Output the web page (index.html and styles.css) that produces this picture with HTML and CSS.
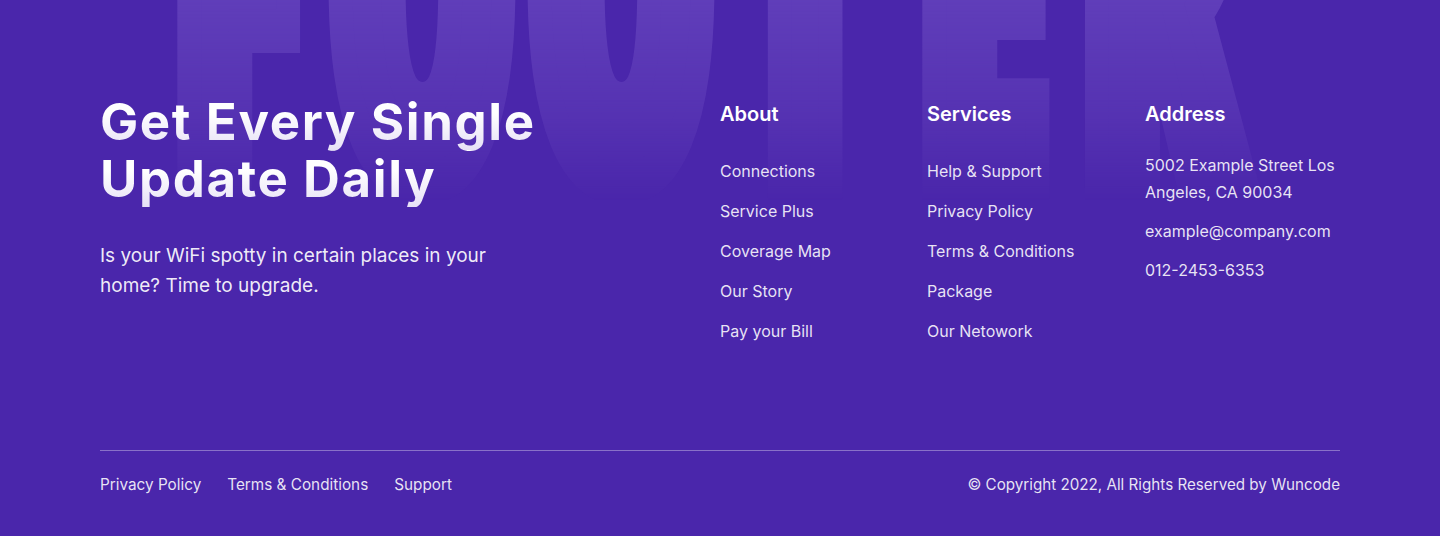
FILE: index.html
```html
<!DOCTYPE html>
<html lang="en">
<head>
<meta charset="utf-8">
<title>Footer</title>
<link rel="stylesheet" href="styles.css">
</head>
<body>
<footer class="footer">
  <div class="bg-word-wrap" aria-hidden="true">
    <div class="bg-word"><span class="l-f">F</span><span class="l-o1">O</span><span class="l-o2">O</span><span class="l-t">T</span><span class="l-e">E</span><span class="l-r">R</span></div>
  </div>
  <div class="container">
    <div class="top">
      <div class="intro">
        <h2 class="intro-title">Get Every Single<br>Update Daily</h2>
        <p class="intro-text">Is your WiFi spotty in certain places in your home? Time to upgrade.</p>
      </div>
      <div class="col">
        <h3 class="col-title">About</h3>
        <ul class="links">
          <li><a href="#">Connections</a></li>
          <li><a href="#">Service Plus</a></li>
          <li><a href="#">Coverage Map</a></li>
          <li><a href="#">Our Story</a></li>
          <li><a href="#">Pay your Bill</a></li>
        </ul>
      </div>
      <div class="col">
        <h3 class="col-title">Services</h3>
        <ul class="links">
          <li><a href="#">Help &amp; Support</a></li>
          <li><a href="#">Privacy Policy</a></li>
          <li><a href="#">Terms &amp; Conditions</a></li>
          <li><a href="#">Package</a></li>
          <li><a href="#">Our Netowork</a></li>
        </ul>
      </div>
      <div class="col">
        <h3 class="col-title">Address</h3>
        <div class="address">
          <p>5002 Example Street Los Angeles, CA 90034</p>
          <p>example@company.com</p>
          <p>012-2453-6353</p>
        </div>
      </div>
    </div>
    <div class="bottom">
      <nav class="bottom-links">
        <a href="#">Privacy Policy</a>
        <a href="#">Terms &amp; Conditions</a>
        <a href="#">Support</a>
      </nav>
      <p class="copyright">© Copyright 2022, All Rights Reserved by Wuncode</p>
    </div>
  </div>
</footer>
</body>
</html>
```

FILE: styles.css
```css
* {
  box-sizing: border-box;
  margin: 0;
  padding: 0;
}

html,
body {
  background: #4a26ab;
}

body {
  font-family: Inter, "Noto Sans", sans-serif;
  color: #fff;
  overflow: hidden;
}

.footer {
  position: relative;
  height: 536px;
  overflow: hidden;
  background: #4a26ab;
}

/* decorative big word */
.bg-word-wrap {
  position: absolute;
  left: 0;
  top: 0;
  width: 100%;
  height: 210px;
  overflow: hidden;
  pointer-events: none;
  -webkit-mask-image: linear-gradient(to bottom, #000 0, rgba(0, 0, 0, 0.55) 110px, transparent 200px);
  mask-image: linear-gradient(to bottom, #000 0, rgba(0, 0, 0, 0.55) 110px, transparent 200px);
}

.bg-word {
  position: absolute;
  left: 152px;
  top: -300px;
  display: flex;
  font-family: "Open Sans", sans-serif;
  font-weight: 800;
  font-stretch: 75%;
  font-size: 300px;
  line-height: 1;
  white-space: nowrap;
  color: #603eb9;
  -webkit-text-stroke: 24px #603eb9;
  transform: scaleY(1.8);
  transform-origin: 0 0;
}

.bg-word span {
  display: block;
  text-align: center;
}

.l-f { width: 170px; }
.l-o1 { width: 200px; }
.l-o2 { width: 198px; }
.l-t { width: 170px; }
.l-e { width: 186px; }
.l-r { width: 170px; }

.container {
  position: relative;
  padding: 0 100px;
}

.top {
  display: grid;
  grid-template-columns: 620px 207px 218px 195px;
  padding-top: 93px;
  padding-bottom: 107px;
}

.intro-title {
  font-weight: 700;
  font-size: 51px;
  line-height: 57px;
  letter-spacing: 1.6px;
  background: linear-gradient(180deg, #ffffff 35%, #e6e0f6 100%) 0 0 / 100% 57px repeat-y;
  -webkit-background-clip: text;
  background-clip: text;
  color: transparent;
}

.intro-text {
  margin-top: 34px;
  max-width: 400px;
  font-size: 19px;
  line-height: 30px;
  color: rgba(255, 255, 255, 0.92);
}

.col {
  padding-top: 9px;
}

.col-title {
  font-size: 20px;
  font-weight: 600;
  line-height: 24px;
}

.links {
  list-style: none;
  margin-top: 33px;
  display: flex;
  flex-direction: column;
  gap: 16px;
}

.links a,
.bottom-links a {
  color: rgba(255, 255, 255, 0.88);
  text-decoration: none;
  font-size: 16px;
  line-height: 24px;
}

.links li {
  line-height: 24px;
}

.address {
  margin-top: 26px;
  display: flex;
  flex-direction: column;
  gap: 12px;
  font-size: 16px;
  line-height: 27px;
  color: rgba(255, 255, 255, 0.88);
}

.bottom {
  display: flex;
  justify-content: space-between;
  align-items: center;
  border-top: 1px solid rgba(255, 255, 255, 0.35);
  padding-top: 22px;
}

.bottom-links {
  display: flex;
  gap: 26px;
}

.bottom-links a {
  font-size: 15.3px;
}

.copyright {
  font-size: 15.2px;
  line-height: 24px;
  color: rgba(255, 255, 255, 0.88);
}
```
